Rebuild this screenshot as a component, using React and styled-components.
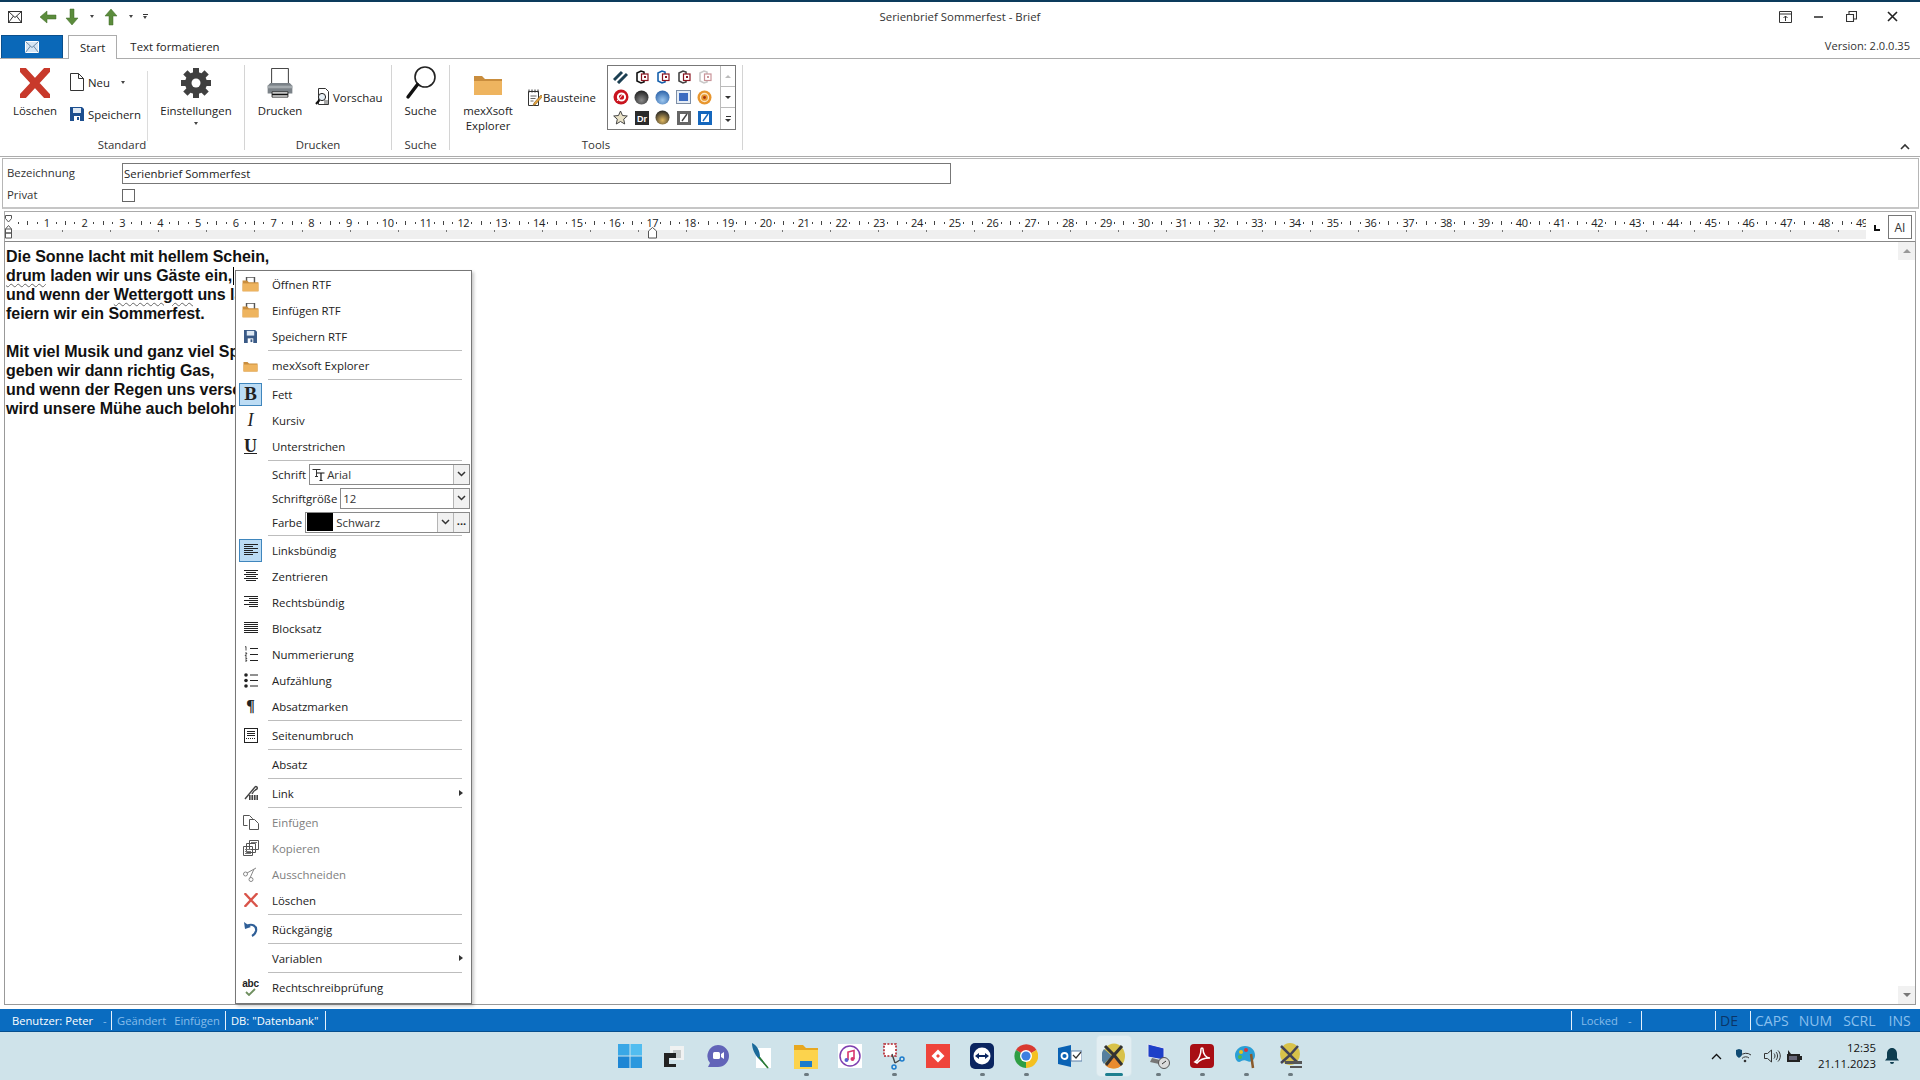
import React from 'react'
import styled, { createGlobalStyle } from 'styled-components'

const GlobalStyle = createGlobalStyle`
    html, body {
        margin: 0;
        width: 1920px;
        height: 1080px;
        overflow: hidden;
        background: #fff;
    }
    * { box-sizing: border-box; }
    svg { flex: none; }
    body {
        font-family: "Open Sans", "Noto Sans", sans-serif;
        font-size: 11.4px;
        color: #222;
    }
`

const Page = styled.div`
    position: relative;
    display: flex;
    flex-direction: column;
    width: 1920px;
    height: 1080px;
`

/* title bar */
const TitleBar = styled.div`
    display: grid;
    grid-template-columns: 1fr auto 1fr;
    align-items: center;
    height: 35px;
    padding-bottom: 4px;
    border-top: 2px solid #0c3b5c;
`
const Qat = styled.div`
    display: flex;
    align-items: center;
    padding-left: 8px;
`
const QatSlot = styled.span`
    display: flex;
    flex-direction: column;
    gap: 1px;
    align-items: center;
    justify-content: center;
    flex: none;
    width: ${({ $w }) => $w}px;
    margin-left: ${({ $ml }) => $ml || 0}px;
`
const TitleText = styled.div`
    color: #333;
`
const WindowButtons = styled.div`
    display: flex;
    justify-content: flex-end;
    align-items: center;
    padding-right: 4px;
`
const WindowButton = styled.span`
    display: flex;
    justify-content: center;
    width: ${({ $w }) => $w || 33}px;
`

/* tabs */
const TabRow = styled.div`
    display: flex;
    align-items: stretch;
    height: 24px;
    border-bottom: 1px solid #acacac;
`
const FileTab = styled.div`
    display: flex;
    align-items: center;
    justify-content: center;
    width: 62px;
    margin-left: 1px;
    background: #0a68b8;
    border: 1px solid #0a4f8c;
    border-bottom: none;
`
const Tab = styled.div`
    display: flex;
    align-items: center;
    justify-content: center;
    height: ${({ $active }) => ($active ? '24px' : '23px')};
    padding: 0 ${({ $active }) => ($active ? '11px' : '13px')};
    margin-left: ${({ $active }) => ($active ? '5px' : '0')};
    background: #fff;
    border: ${({ $active }) => ($active ? '1px solid #acacac' : 'none')};
    border-bottom: none;
`
const Version = styled.div`
    display: flex;
    align-items: center;
    margin-left: auto;
    padding: 0 10px 2px 0;
    font-size: 11.1px;
    color: #333;
`

/* ribbon */
const Ribbon = styled.div`
    position: relative;
    display: flex;
    align-items: flex-start;
    height: 98px;
    padding-top: 6px;
    border-bottom: 1px solid #acacac;
`
const Group = styled.div`
    display: flex;
    flex-direction: column;
    flex: none;
    width: ${({ $w }) => $w}px;
    height: 85px;
    border-right: 1px solid #d4d4d4;
`
const GroupBody = styled.div`
    display: flex;
    align-items: flex-start;
    height: 70px;
`
const GroupLabel = styled.div`
    height: 15px;
    line-height: 20px;
    text-align: center;
    color: #333;
`
const LargeButton = styled.div`
    display: flex;
    flex-direction: column;
    align-items: center;
    flex: none;
    width: ${({ $w }) => $w}px;
    margin-left: ${({ $ml }) => $ml || 0}px;
    line-height: 15px;
    text-align: center;
`
const LargeIcon = styled.div`
    display: flex;
    align-items: center;
    justify-content: center;
    height: 36px;
    margin-bottom: 2px;
`
const SmallArrow = styled.span`
    width: 0;
    height: 0;
    margin-left: ${({ $ml }) => $ml || 0}px;
    border-left: 2.5px solid transparent;
    border-right: 2.5px solid transparent;
    border-top: 3px solid #444;
`
const LargeArrow = styled(SmallArrow)`
    margin-top: 4px;
`
const SmallStack = styled.div`
    display: flex;
    flex-direction: column;
    gap: 10px;
    flex: none;
    width: ${({ $w }) => $w}px;
    padding-top: ${({ $top }) => $top}px;
`
const SmallButton = styled.div`
    display: flex;
    align-items: center;
    gap: ${({ $gap }) => $gap || 3}px;
    height: 22px;
    padding-left: ${({ $pl }) => $pl || 0}px;
`
const InnerSep = styled.div`
    align-self: stretch;
    width: 1px;
    margin: 6px 0 -6px;
    background: #dcdcdc;
`
const Gallery = styled.div`
    display: grid;
    grid-template-columns: 1fr 15px;
    flex: none;
    width: 129px;
    height: 65px;
    border: 1px solid #777;
`
const GalleryGrid = styled.div`
    display: grid;
    grid-template-columns: repeat(5, 1fr);
    grid-template-rows: repeat(3, 1fr);
    place-items: center;
    padding: 1px 5px 1px 2px;
`
const GalleryScroll = styled.div`
    display: grid;
    grid-template-rows: repeat(3, 1fr);
    border-left: 1px solid #bbb;
`
const GalleryScrollButton = styled.div`
    display: flex;
    flex-direction: column;
    gap: 2px;
    align-items: center;
    justify-content: center;
    border-bottom: 1px solid #bbb;
    &:last-child { border-bottom: none; }
`
const Bar = styled.i`
    display: block;
    width: 5px;
    height: 1px;
    background: #333;
`
const Triangle = styled.span`
    width: 0;
    height: 0;
    border-left: ${({ $size }) => $size || 3}px solid transparent;
    border-right: ${({ $size }) => $size || 3}px solid transparent;
    ${({ $up, $color, $size }) => ($up
        ? `border-bottom: ${$size || 3}px solid ${$color || '#333'};`
        : `border-top: ${$size || 3}px solid ${$color || '#333'};`)}
`
const Collapse = styled.div`
    position: absolute;
    right: 10px;
    bottom: 6px;
    line-height: 0;
`

/* form */
const FormPanel = styled.div`
    display: grid;
    grid-template-columns: 115px 829px;
    grid-template-rows: 22px 22px;
    align-items: center;
    height: 51px;
    margin: 1px 1px 0 2px;
    padding: 3px 0 0 4px;
    border: 1px solid #b6b6b6;
    border-bottom: 2px solid #c6c6c6;
`
const FieldLabel = styled.div`
    margin-top: -1px;
    color: #333;
`
const TextField = styled.input`
    height: 21px;
    padding: 0 1px;
    border: 1px solid #777;
    outline: none;
    font: inherit;
    color: #222;
`
const CheckBox = styled.span`
    width: 13px;
    height: 13px;
    border: 1px solid #666;
`

/* ruler */
const RulerBox = styled.div`
    display: flex;
    height: 31px;
    margin: 2px 4px 0;
    padding: 3px 0 2px;
    border: 1px solid #aaa;
    border-bottom: 1px solid #888;
`
const RulerBody = styled.div`
    position: relative;
    flex: none;
    width: 1861px;
    overflow: hidden;
`
const RulerStrip = styled.div`
    display: flex;
    align-items: center;
    height: 15px;
    padding-left: 8.9px;
    font-size: 11px;
    color: #222;
`
const RulerCell = styled.div`
    display: flex;
    align-items: center;
    flex: none;
    width: 37.8px;
`
const RulerTicks = styled.div`
    display: flex;
    align-items: center;
    justify-content: space-between;
    flex: none;
    width: 27.8px;
    padding: 0 4px;
`
const RulerTick = styled.i`
    display: block;
    width: 1px;
    height: ${({ $tall }) => ($tall ? 4 : 2)}px;
    background: #444;
`
const RulerNum = styled.span`
    flex: none;
    width: 10px;
    text-align: center;
    letter-spacing: -0.4px;
`
const RulerShade = styled.div`
    height: 9px;
    background-color: #efefef;
    background-image: repeating-linear-gradient(90deg, transparent 0 47px, #777 47px 48px);
    background-size: 100% 2px;
    background-repeat: no-repeat;
    background-position: 10px 0;
`
const RulerMarker = styled.svg`
    position: absolute;
    top: ${({ $top }) => $top}px;
    left: ${({ $left }) => $left}px;
`
const TabStop = styled.div`
    display: flex;
    align-items: center;
    justify-content: center;
    flex: none;
    width: 22px;
    padding-top: 2px;
`
const AutoButton = styled.div`
    display: flex;
    align-items: center;
    justify-content: center;
    flex: none;
    width: 24px;
    height: 24px;
    border: 1px solid #777;
    font-size: 12px;
    color: #333;
`

/* editor */
const Editor = styled.div`
    display: flex;
    flex: 1;
    min-height: 0;
    margin: 0 4px 4px;
    border: 1px solid #999;
    border-top: none;
`
const Letter = styled.div`
    flex: 1;
    padding: 5px 0 0 1px;
    font-family: "Liberation Sans", Arial, sans-serif;
    font-size: 16px;
    font-weight: 700;
    line-height: 19px;
    letter-spacing: -0.05px;
    color: #111;
    white-space: pre;
`
const Squiggle = styled.span`
    text-decoration: underline wavy #666 1px;
    text-underline-offset: 2px;
`
const Caret = styled.span`
    display: inline-block;
    width: 1px;
    height: 18px;
    margin-left: 1px;
    vertical-align: -4px;
    background: #000;
`
const ScrollColumn = styled.div`
    display: flex;
    flex-direction: column;
    justify-content: space-between;
    flex: none;
    width: 17px;
    background: #fff;
`
const ScrollButton = styled.div`
    display: flex;
    align-items: center;
    justify-content: center;
    height: 18px;
    background: #f1f1f1;
`

/* context menu */
const Menu = styled.div`
    position: absolute;
    top: 270px;
    left: 235px;
    width: 237px;
    padding: 0 1px 3px;
    background: #fff;
    border: 1px solid #777;
    box-shadow: 2px 2px 3px rgba(0, 0, 0, 0.22);
    z-index: 2;
`
const MenuRow = styled.div`
    display: grid;
    grid-template-columns: 35px 1fr 12px;
    align-items: center;
    height: 26px;
    color: ${({ $disabled }) => ($disabled ? '#808080' : '#222')};
`
const MenuIcon = styled.span`
    display: flex;
    align-items: center;
    justify-content: center;
    justify-self: start;
    width: 23px;
    height: 23px;
    margin-left: 2px;
    ${({ $on }) => $on && `
        background: #bcdcf4;
        border: 1px solid #3f86bd;
    `}
`
const MenuGlyph = styled.span`
    font-family: "Liberation Serif", serif;
    font-size: ${({ $size }) => $size || 18}px;
    font-weight: ${({ $italic }) => ($italic ? 400 : 700)};
    font-style: ${({ $italic }) => ($italic ? 'italic' : 'normal')};
    text-decoration: ${({ $underline }) => ($underline ? 'underline' : 'none')};
    color: #222;
`
const SubArrow = styled.span`
    width: 0;
    height: 0;
    margin-left: 1px;
    border-top: 3.5px solid transparent;
    border-bottom: 3.5px solid transparent;
    border-left: 4px solid #333;
`
const MenuSep = styled.div`
    height: 1px;
    margin: 1px 8px 1px 31px;
    background: #bdbdbd;
`
const ComboRow = styled.div`
    display: flex;
    align-items: center;
    gap: 3px;
    height: 24px;
    padding: 0 0 0 35px;
`
const Combo = styled.div`
    display: flex;
    align-items: stretch;
    flex: 1;
    height: 21px;
    border: 1px solid #8a8a8a;
`
const ComboValue = styled.div`
    display: flex;
    align-items: center;
    flex: 1;
    gap: 2px;
    padding-left: 2px;
    color: #333;
`
const ComboButton = styled.div`
    display: flex;
    align-items: center;
    justify-content: center;
    flex: none;
    width: 16px;
    background: #f1f1f1;
    border-left: 1px solid #b5b5b5;
`
const Swatch = styled.span`
    width: 26px;
    height: 18px;
    margin: 0 1px 0 -1px;
    background: #000;
`
const Dots = styled.span`
    font-weight: 700;
    font-size: 11px;
    line-height: 1;
    margin-top: -4px;
`
const AbcText = styled.span`
    display: block;
    font-family: "Liberation Sans", sans-serif;
    font-size: 10px;
    font-weight: 700;
    line-height: 9px;
    text-align: center;
    letter-spacing: -0.2px;
`
const AbcIcon = styled.span`
    display: flex;
    flex-direction: column;
    align-items: center;
`

/* status bar */
const StatusBar = styled.div`
    display: flex;
    align-items: center;
    flex: none;
    height: 23px;
    background: #0a6cc0;
    border-bottom: 1px solid #064f8e;
    color: #fff;
    font-size: 11.2px;
`
const StatusCell = styled.div`
    display: flex;
    align-items: center;
    flex: none;
    width: ${({ $w }) => $w}px;
    height: 19px;
    gap: ${({ $gap }) => $gap || 0}px;
    padding-left: ${({ $pl }) => $pl || 0}px;
    margin-left: ${({ $ml }) => $ml || 0}px;
    border-right: ${({ $plain }) => ($plain ? 'none' : '1px solid #e6f1fb')};
    color: ${({ $dim }) => ($dim ? '#86bcea' : 'inherit')};
`
const StatusStart = styled.div`
    flex: none;
    width: 1px;
    height: 19px;
    margin-left: ${({ $ml }) => $ml}px;
    background: #e6f1fb;
`
const Dim = styled.span`
    color: #86bcea;
    margin-left: ${({ $ml }) => $ml || 0}px;
`
const KeyFlag = styled.span`
    font-size: 14px;
    color: ${({ $dark }) => ($dark ? '#0a3568' : '#8ac0ee')};
    margin-left: ${({ $ml }) => $ml || 0}px;
`

/* taskbar */
const Taskbar = styled.div`
    display: grid;
    grid-template-columns: 1fr auto 1fr;
    align-items: center;
    flex: none;
    height: 48px;
    background: #cfe3ea;
`
const TaskIcons = styled.div`
    grid-column: 2;
    display: flex;
    align-items: center;
`
const TaskSlot = styled.div`
    position: relative;
    display: flex;
    align-items: center;
    justify-content: center;
    width: 44px;
    height: 40px;
    border-radius: 4px;
    ${({ $active }) => $active && `
        background: #e2eef2;
        box-shadow: 0 0 0 1px #d7e6ec;
        margin: 0 5px;
        width: 34px;
    `}
`
const TaskDot = styled.i`
    position: absolute;
    left: 50%;
    bottom: 0;
    width: ${({ $active }) => ($active ? 18 : 5)}px;
    height: 3px;
    margin-left: ${({ $active }) => ($active ? -9 : -2.5)}px;
    border-radius: 2px;
    background: ${({ $active }) => ($active ? '#1d7f8f' : '#6c7a80')};
`
const Tray = styled.div`
    display: flex;
    align-items: center;
    justify-content: flex-end;
    padding-right: 18px;
`
const TrayIcon = styled.span`
    display: flex;
    justify-content: center;
    flex: none;
    width: ${({ $w }) => $w}px;
`
const Clock = styled.div`
    margin: 0 6px 0 13px;
    font-size: 11.4px;
    line-height: 16px;
    text-align: right;
    color: #111;
`

/* drawings */
const CrossIcon = ({ size = 30, color = '#c8392b', width = 7 }) => (
    <svg width={size} height={size} viewBox="0 0 30 30">
        <path d="M3 2 L27 28 M27 2 L3 28" stroke={color} strokeWidth={width} strokeLinecap="square" />
    </svg>
)
const DocIcon = () => (
    <svg width="14" height="18" viewBox="0 0 14 18">
        <path d="M.5.5h8l5 5v12H.5z M8.5.5v5h5" fill="#fff" stroke="#333" />
    </svg>
)
const SaveIcon = ({ size = 14, color = '#1d4f8f' }) => (
    <svg width={size} height={size} viewBox="0 0 14 14">
        <path d="M0 0h12l2 2v12H0z" fill={color} />
        <path d="M3 1h8v5H3z" fill="#dfe9f4" />
        <path d="M4 9h6v5H4z" fill="#fff" />
        <path d="M7 10h2v3H7z" fill={color} />
    </svg>
)
const GearIcon = () => (
    <svg width="32" height="32" viewBox="0 0 32 32">
        {[0, 45, 90, 135, 180, 225, 270, 315].map((a) => (
            <rect key={a} x="13" y="1" width="6" height="7" fill="#404040" transform={`rotate(${a} 16 16)`} />
        ))}
        <circle cx="16" cy="16" r="11" fill="#404040" />
        <circle cx="16" cy="16" r="4.5" fill="#fff" />
    </svg>
)
const PrinterIcon = () => (
    <svg width="32" height="30" viewBox="0 0 32 34">
        <path d="M6.5.5h19v20h-19z" fill="#fff" stroke="#222" />
        <path d="M2 20l3-3h22l3 3v9H2z" fill="#7b8288" />
        <path d="M2 20h28v3H2z" fill="#a4aaae" />
        <path d="M7 27h18v6H7z" fill="#fff" stroke="#222" />
        <path d="M7 29h18v2H7z" fill="#111" />
    </svg>
)
const PreviewIcon = () => (
    <svg width="16" height="18" viewBox="0 0 16 18">
        <path d="M3.5.5h7l3 3v13h-10z" fill="#fff" stroke="#333" />
        <circle cx="7" cy="9" r="3.6" fill="#e8f0f6" stroke="#222" />
        <path d="M4.5 12L1 16" stroke="#111" strokeWidth="2" />
        <path d="M9 15h5M9 13h5" stroke="#555" />
    </svg>
)
const MagnifierIcon = () => (
    <svg width="32" height="36" viewBox="0 0 32 36">
        <circle cx="20" cy="12" r="10" fill="#fff" stroke="#222" strokeWidth="1.6" />
        <path d="M12.5 19.5L3 32" stroke="#111" strokeWidth="3.4" strokeLinecap="round" />
    </svg>
)
const FolderIcon = ({ width = 30, height = 26, paper }) => (
    <svg width={width} height={height} viewBox="0 0 30 26">
        {paper && <path d="M8 0h14v14H8z" fill="#fff" stroke="#555" strokeWidth="2.5" />}
        <path d="M1 6h8l3 3h17v16H1z" fill="#c98d3d" />
        <path d="M1 11h28v14H1z" fill="#eeb45f" />
    </svg>
)
const NoteIcon = () => (
    <svg width="15" height="17" viewBox="0 0 15 17">
        <path d="M1.5 2.5h10v14h-10z" fill="#fff" stroke="#333" />
        <path d="M2 .5v3M5 .5v3M8 .5v3M11 .5v3" stroke="#333" />
        <path d="M3.5 7h6M3.5 9.5h5M3.5 12h3" stroke="#666" />
        <path d="M14 6l-7 8-1 2.5 2.5-1 7-8z" fill="#e8a33c" stroke="#7a5a20" strokeWidth=".6" />
    </svg>
)
const ArrowIcon = ({ rotate = 0 }) => (
    <svg width="18" height="18" viewBox="0 0 18 18" style={{ transform: `rotate(${rotate}deg)` }}>
        <path d="M9 1L3 8h4v9h4V8h4z" fill="#5b8c3c" stroke="#3e6a26" strokeWidth=".5" />
    </svg>
)
const MailIcon = ({ color = '#333', fill = 'none' }) => (
    <svg width="14" height="12" viewBox="0 0 14 12">
        <rect x=".5" y=".5" width="13" height="11" fill={fill} stroke={color} />
        <path d="M.5.5L7 6.5 13.5.5M.5 11.5L5.5 5M13.5 11.5L8.5 5" fill="none" stroke={fill === 'none' ? color : '#6d8aa6'} />
    </svg>
)
const AlignIcon = ({ rows }) => (
    <svg width="16" height="14" viewBox="0 0 16 14">
        {rows.map(([x1, x2], i) => (
            <path key={i} d={`M${x1} ${i * 2 + 1.5}H${x2}`} stroke="#222" />
        ))}
    </svg>
)
const NumberedIcon = () => (
    <svg width="14" height="17" viewBox="0 0 14 17">
        <path d="M1 1l1-.5v4M1 7h2l-2 3h2M1 12h2l-1 1.5 1 1.5H1" fill="none" stroke="#222" strokeWidth=".8" />
        <path d="M6 2.5h8M6 8.5h8M6 14.5h8" stroke="#222" />
    </svg>
)
const BulletIcon = () => (
    <svg width="14" height="15" viewBox="0 0 14 15">
        <circle cx="2" cy="2" r="1.8" fill="#222" />
        <circle cx="2" cy="7.5" r="1.8" fill="#222" />
        <circle cx="2" cy="13" r="1.8" fill="#222" />
        <path d="M6 2h8M6 7.5h8M6 13h8" stroke="#222" />
    </svg>
)
const PageBreakIcon = () => (
    <svg width="14" height="15" viewBox="0 0 14 15">
        <rect x=".5" y=".5" width="13" height="14" fill="#fff" stroke="#222" />
        <path d="M3 3.5h8M3 5.5h8M3 7.5h8" stroke="#222" />
        <path d="M2 10.5h10" stroke="#222" strokeDasharray="1 1" />
    </svg>
)
const LinkIcon = () => (
    <svg width="17" height="16" viewBox="0 0 17 16">
        <path d="M3 14L13 2c1-1 3 0 2 2-3 1-4 3-5 5" fill="none" stroke="#444" strokeWidth="1.4" />
        <path d="M7 10h9v5H7z" fill="#444" />
        <path d="M9 10v5M11.5 10v5M14 10v5" stroke="#ddd" />
    </svg>
)
const PasteIcon = () => (
    <svg width="16" height="15" viewBox="0 0 16 15">
        <path d="M4.5 10.5H.5v-10h6l3 3v2" fill="#fff" stroke="#555" />
        <path d="M6.5 4.5h5l4 4v6h-9z" fill="#fff" stroke="#555" />
    </svg>
)
const CopyIcon = () => (
    <svg width="16" height="16" viewBox="0 0 16 16">
        <path d="M6.5.5h9v9h-9zM3.5 3.5h9v9h-9zM.5 6.5h9v9h-9z" fill="#fff" stroke="#555" />
        <path d="M2 9.5h6M2 11.5h6M2 13.5h6M8 2.5h6" stroke="#777" />
    </svg>
)
const ScissorsIcon = () => (
    <svg width="15" height="15" viewBox="0 0 15 15">
        <circle cx="2.5" cy="7" r="2" fill="none" stroke="#888" />
        <circle cx="8" cy="12.5" r="2" fill="none" stroke="#888" />
        <path d="M4 6l9-5M7 11L11 2" fill="none" stroke="#888" />
    </svg>
)
const UndoIcon = () => (
    <svg width="16" height="16" viewBox="0 0 16 16">
        <path d="M1 1l1 7 6-2z" fill="#2f5f97" />
        <path d="M4 5c5-3 10 0 9 5-.5 2-2 4-4 5" fill="none" stroke="#2f5f97" strokeWidth="2.2" />
    </svg>
)
const CheckIcon = () => (
    <svg width="13" height="8" viewBox="0 0 13 8">
        <path d="M2 4l3 3 6-6" fill="none" stroke="#6f8f5f" strokeWidth="1.8" />
    </svg>
)
const FontIcon = () => (
    <svg width="13" height="13" viewBox="0 0 13 13">
        <path d="M.5 1.5h8M4.5 1.5v7M3 8.5h3" stroke="#333" fill="none" />
        <path d="M5 5h7.5M9 5v7.5M7.5 12.5h3" stroke="#111" strokeWidth="1.2" fill="none" />
    </svg>
)
const ChevronDown = ({ color = '#333' }) => (
    <svg width="9" height="6" viewBox="0 0 9 6">
        <path d="M1 1l3.5 3.5L8 1" fill="none" stroke={color} strokeWidth="1.5" />
    </svg>
)

/* gallery icons */
const Boxes = ({ color, faded }) => (
    <svg width="14" height="14" viewBox="0 0 14 14" opacity={faded ? 0.45 : 1}>
        <path d="M2 3l4-2 3 1v10l-3 1-4-2z" fill="#fff" stroke={color} strokeWidth="1.6" />
        <rect x="6.5" y="4" width="6.5" height="6.5" fill="#fff" stroke="#8a1520" strokeWidth="1.2" />
        <rect x="9" y="6" width="2" height="2" fill="#8a1520" />
    </svg>
)
const Sphere = ({ id, light, dark }) => (
    <svg width="15" height="15" viewBox="0 0 15 15">
        <defs>
            <radialGradient id={id} cx=".5" cy=".7" r=".7">
                <stop offset="0" stopColor={light} />
                <stop offset="1" stopColor={dark} />
            </radialGradient>
        </defs>
        <circle cx="7.5" cy="7.5" r="7" fill={`url(#${id})`} />
    </svg>
)
const galleryIcons = [
    <svg key="g1" width="15" height="14" viewBox="0 0 15 14"><path d="M1 10l8-8M5 13l9-9" stroke="#1c3f52" strokeWidth="3" /></svg>,
    <Boxes key="g2" color="#111" />,
    <Boxes key="g3" color="#1560ad" />,
    <Boxes key="g4" color="#444" />,
    <Boxes key="g5" color="#888" faded />,
    <svg key="g6" width="16" height="16" viewBox="0 0 16 16"><circle cx="8" cy="8" r="7.5" fill="#c9141e" /><circle cx="8.5" cy="8" r="3.6" fill="none" stroke="#fff" strokeWidth="2" /><path d="M4 12l7-8" stroke="#fff" /></svg>,
    <Sphere key="g7" id="gs1" light="#8a8a8a" dark="#1f1f1f" />,
    <Sphere key="g8" id="gs2" light="#9cc6ee" dark="#2b62a8" />,
    <svg key="g9" width="15" height="14" viewBox="0 0 15 14"><rect x=".5" y=".5" width="14" height="13" fill="#e6edf5" stroke="#7d8ea6" /><rect x="3" y="3" width="9" height="8" fill="#3d6cc0" /></svg>,
    <svg key="g10" width="15" height="15" viewBox="0 0 15 15"><circle cx="7.5" cy="7.5" r="7" fill="#e8962e" /><circle cx="7.5" cy="7.5" r="4" fill="none" stroke="#fbe7c6" strokeWidth="1.3" /><circle cx="7.5" cy="7.5" r="1.4" fill="#a3330f" /></svg>,
    <svg key="g11" width="15" height="15" viewBox="0 0 15 15"><path d="M7.5 1l2 4.5 4.8.5-3.6 3.2 1 4.8-4.2-2.5-4.2 2.5 1-4.8L.7 6l4.8-.5z" fill="#e9e2c8" stroke="#444" /></svg>,
    <svg key="g12" width="14" height="14" viewBox="0 0 14 14"><rect width="14" height="14" fill="#2b2b2b" /><text x="7" y="10.5" textAnchor="middle" fontSize="9" fontWeight="700" fontFamily="Liberation Sans" fill="#fff">Dr</text></svg>,
    <Sphere key="g13" id="gs3" light="#e0b860" dark="#222" />,
    <svg key="g14" width="14" height="14" viewBox="0 0 14 14"><rect width="14" height="14" fill="#666" /><rect x="3" y="3" width="8" height="8" fill="#fff" /><path d="M5 10l5-7" stroke="#444" strokeWidth="1.4" /></svg>,
    <svg key="g15" width="14" height="14" viewBox="0 0 14 14"><rect width="14" height="14" fill="#1567bd" /><rect x="3" y="3" width="8" height="8" fill="#fff" /><path d="M5 10l5-7" stroke="#1567bd" strokeWidth="1.4" /></svg>,
]

/* taskbar icons */
const taskIcons = [
    { dot: false, icon: <svg width="24" height="24" viewBox="0 0 24 24"><path d="M0 0h11.5v11.5H0z" fill="#39a7e6" /><path d="M12.5 0H24v11.5H12.5z" fill="#52bdf0" /><path d="M0 12.5h11.5V24H0z" fill="#1e86d4" /><path d="M12.5 12.5H24V24H12.5z" fill="#2a98de" /></svg> },
    { dot: false, icon: <svg width="24" height="24" viewBox="0 0 24 24"><path d="M8 2h14v14H8z" fill="#f0f2f2" /><path d="M11 6h8v8h-8z" fill="#c8cccc" /><path d="M2 9h12v5H7v6h7v3H2z" fill="#222" /></svg> },
    { dot: false, icon: <svg width="24" height="24" viewBox="0 0 24 24"><path d="M12 1a11 11 0 0 1 0 22H2l2-4A11 11 0 0 1 12 1z" fill="#6264b8" /><rect x="7" y="8" width="7" height="7" rx="1.5" fill="#fff" /><path d="M15 10l3-2v7l-3-2z" fill="#fff" /></svg> },
    { dot: false, icon: <svg width="24" height="28" viewBox="0 0 24 28"><path d="M6 6h15v20H6z" fill="#fff" /><path d="M2 1c5 2 8 8 8 14l9 12-10-10C5 13 2 7 2 1z" fill="#1b6a9a" /><path d="M9 15l9 11" stroke="#2e7d32" strokeWidth="1.6" /></svg> },
    { dot: true, icon: <svg width="24" height="26" viewBox="0 0 24 26"><path d="M0 2h9l3 3h12v21H0z" fill="#e8a820" /><path d="M0 7h24v19H0z" fill="#fcd34d" /><path d="M6 18h12v6H6z" fill="#1c7ccc" /></svg> },
    { dot: false, icon: <svg width="24" height="24" viewBox="0 0 24 24"><rect width="24" height="24" fill="#fff" /><circle cx="12" cy="12" r="10" fill="#fff" stroke="#7f3fb0" strokeWidth="1.5" /><path d="M10 16V8l6-1.5V15" fill="none" stroke="#d9366e" strokeWidth="1.6" /><circle cx="8.5" cy="16" r="2" fill="#5a5fd0" /><circle cx="14.5" cy="15" r="2" fill="#d9366e" /></svg> },
    { dot: true, icon: <svg width="24" height="28" viewBox="0 0 24 28"><rect x="2" y="2" width="12" height="12" fill="#fff" stroke="#b3202a" strokeWidth="1.6" strokeDasharray="2 1.4" /><path d="M10 12l3 9M18 18l-5 3" stroke="#444" strokeWidth="1.4" /><circle cx="20" cy="17" r="2" fill="none" stroke="#1c7ccc" strokeWidth="1.5" /><circle cx="12" cy="25" r="2" fill="none" stroke="#1c7ccc" strokeWidth="1.5" /></svg> },
    { dot: false, icon: <svg width="24" height="24" viewBox="0 0 24 24"><rect width="24" height="24" fill="#ef443b" /><path d="M12 5.500l6.500 6.500-6.500 6.500L5.500 12z" fill="#fff" /><path d="M12 10l2 2-2 2-2-2z" fill="#ef443b" /></svg> },
    { dot: true, icon: <svg width="24" height="26" viewBox="0 0 24 26"><rect width="24" height="26" rx="5" fill="#0b2560" /><circle cx="12" cy="13" r="8.5" fill="#fff" /><path d="M5 13l4-3v2h6v-2l4 3-4 3v-2H9v2z" fill="#0b2560" /></svg> },
    { dot: true, icon: <svg width="24" height="24" viewBox="0 0 24 24"><path d="M12 12L2 6a12 12 0 0 1 20.500 0z" fill="#d93a30" /><path d="M12 12l10.500-6A12 12 0 0 1 12 24z" fill="#f4c020" /><path d="M12 12v12A12 12 0 0 1 2 6z" fill="#2f9e44" /><circle cx="12" cy="12" r="6" fill="#fff" /><circle cx="12" cy="12" r="4.600" fill="#3d7fe0" /></svg> },
    { dot: false, icon: <svg width="24" height="24" viewBox="0 0 24 24"><path d="M0 4l13-3v22L0 20z" fill="#0a62b4" /><circle cx="6.500" cy="12" r="3" fill="none" stroke="#fff" strokeWidth="1.8" /><rect x="13" y="7" width="11" height="10" fill="#fff" stroke="#5a7fa8" /><path d="M15 11l3 3 5-6" fill="none" stroke="#333" strokeWidth="1.2" /></svg> },
    { dot: true, active: true, icon: <svg width="24" height="26" viewBox="0 0 24 26"><ellipse cx="12" cy="13" rx="11" ry="12.500" fill="#d8c24a" /><path d="M2 6l8 7-8 8a12 12 0 0 1 0-15z" fill="#557f9e" /><path d="M3 22l9-8 8 8a12 12 0 0 1-17 0z" fill="#e88b2e" /><path d="M3 3l9 9 8-9" fill="none" stroke="#333" strokeWidth="3" /><path d="M4 22l8-10 8 10" fill="none" stroke="#333" strokeWidth="3" /></svg> },
    { dot: true, icon: <svg width="24" height="28" viewBox="0 0 24 28"><path d="M2 2l16 4v12L2 15z" fill="#1d3fc8" stroke="#e8eaf0" /><path d="M6 16l8 2-1 4-9-2z" fill="#777" /><circle cx="18" cy="21" r="5.500" fill="#dcdcdc" stroke="#555" /><path d="M16 22l4-3" stroke="#333" /></svg> },
    { dot: true, icon: <svg width="24" height="24" viewBox="0 0 24 24"><rect width="24" height="24" rx="4" fill="#a80e14" /><path d="M5 18c4-2 6-8 6-13 0-1.500 2-1.500 2 0 0 5 3 9 7 9-5 0-10 1-13 5z" fill="none" stroke="#fff" strokeWidth="1.500" /></svg> },
    { dot: true, icon: <svg width="24" height="26" viewBox="0 0 24 26"><path d="M11 3c6 0 10 4 10 9s-4 8-8 6-6 1-8 1-4-3-4-7 4-9 10-9z" fill="#2b9fd6" /><circle cx="7" cy="9" r="2" fill="#e8c020" /><circle cx="12" cy="7" r="2" fill="#d9363e" /><circle cx="6" cy="14" r="2" fill="#54b948" /><path d="M17 11l2 14" stroke="#8a5a2b" strokeWidth="2.500" /></svg> },
    { dot: true, icon: <svg width="24" height="26" viewBox="0 0 24 26"><ellipse cx="12" cy="11" rx="10" ry="11" fill="#d8c24a" /><path d="M3 3l9 9 8-9M3 20l9-8 8 8" fill="none" stroke="#445" strokeWidth="2.500" /><path d="M7 18h17v3H7zM12 23h12v2H12z" fill="#555" /></svg> },
]

const menuBefore = [
    { label: 'Öffnen RTF', icon: <FolderIcon width={17} height={15} paper /> },
    { label: 'Einfügen RTF', icon: <FolderIcon width={17} height={15} paper /> },
    { label: 'Speichern RTF', icon: <SaveIcon size={13} color="#3a5a86" /> },
    { sep: true },
    { label: 'mexXsoft Explorer', icon: <FolderIcon width={17} height={13} /> },
    { sep: true },
    { label: 'Fett', on: true, icon: <MenuGlyph $size={19}>B</MenuGlyph> },
    { label: 'Kursiv', icon: <MenuGlyph $italic>I</MenuGlyph> },
    { label: 'Unterstrichen', icon: <MenuGlyph $underline>U</MenuGlyph> },
    { sep: true },
]

const menuAfter = [
    { sep: true },
    { label: 'Linksbündig', on: true, icon: <AlignIcon rows={[[1, 15], [1, 10], [1, 15], [1, 10], [1, 15], [1, 10]]} /> },
    { label: 'Zentrieren', icon: <AlignIcon rows={[[1, 15], [3, 13], [1, 15], [3, 13], [1, 15], [3, 13]]} /> },
    { label: 'Rechtsbündig', icon: <AlignIcon rows={[[1, 15], [6, 15], [1, 15], [6, 15], [1, 15], [6, 15]]} /> },
    { label: 'Blocksatz', icon: <AlignIcon rows={[[1, 15], [1, 15], [1, 15], [1, 15], [1, 15], [1, 15]]} /> },
    { label: 'Nummerierung', icon: <NumberedIcon /> },
    { label: 'Aufzählung', icon: <BulletIcon /> },
    { label: 'Absatzmarken', icon: <MenuGlyph $size={16}>¶</MenuGlyph> },
    { sep: true },
    { label: 'Seitenumbruch', icon: <PageBreakIcon /> },
    { sep: true },
    { label: 'Absatz' },
    { sep: true },
    { label: 'Link', sub: true, icon: <LinkIcon /> },
    { sep: true },
    { label: 'Einfügen', disabled: true, icon: <PasteIcon /> },
    { label: 'Kopieren', disabled: true, icon: <CopyIcon /> },
    { label: 'Ausschneiden', disabled: true, icon: <ScissorsIcon /> },
    { label: 'Löschen', icon: <CrossIcon size={14} color="#d9544a" width={5} /> },
    { sep: true },
    { label: 'Rückgängig', icon: <UndoIcon /> },
    { sep: true },
    { label: 'Variablen', sub: true },
    { sep: true },
    { label: 'Rechtschreibprüfung', icon: <AbcIcon><AbcText>abc</AbcText><CheckIcon /></AbcIcon> },
]

const renderMenuItems = (items) => items.map((item, i) => (
    item.sep ? <MenuSep key={i} /> : (
        <MenuRow key={item.label} $disabled={item.disabled}>
            <MenuIcon $on={item.on}>{item.icon}</MenuIcon>
            <span>{item.label}</span>
            {item.sub && <SubArrow />}
        </MenuRow>
    )
))

const rulerNumbers = Array.from({ length: 49 }, (_, i) => i + 1)

const App = () => (
    <Page>
        <GlobalStyle />
        <TitleBar>
            <Qat>
                <QatSlot $w={14}><MailIcon /></QatSlot>
                <QatSlot $w={18} $ml={17}><ArrowIcon rotate={-90} /></QatSlot>
                <QatSlot $w={18} $ml={6}><ArrowIcon rotate={180} /></QatSlot>
                <QatSlot $w={21}><SmallArrow /></QatSlot>
                <QatSlot $w={18}><ArrowIcon /></QatSlot>
                <QatSlot $w={22}><SmallArrow /></QatSlot>
                <QatSlot $w={6}><Bar /><SmallArrow /></QatSlot>
            </Qat>
            <TitleText>Serienbrief Sommerfest - Brief</TitleText>
            <WindowButtons>
                <WindowButton>
                    <svg width="13" height="12" viewBox="0 0 13 12"><path d="M.5.5h12v11H.5zM.5 3h12M6.500 10V5M4.500 7l2-2 2 2" fill="none" stroke="#333" /></svg>
                </WindowButton>
                <WindowButton>
                    <svg width="9" height="2" viewBox="0 0 9 2"><path d="M0 1h9" stroke="#333" strokeWidth="1.6" /></svg>
                </WindowButton>
                <WindowButton>
                    <svg width="11" height="11" viewBox="0 0 11 11"><path d="M.5 3.500h7v7h-7zM3 3V.5h7.500V8H8" fill="none" stroke="#333" strokeWidth="1.1" /></svg>
                </WindowButton>
                <WindowButton $w={48}>
                    <svg width="11" height="11" viewBox="0 0 11 11"><path d="M1 1l9 9M10 1l-9 9" stroke="#222" strokeWidth="1.6" /></svg>
                </WindowButton>
            </WindowButtons>
        </TitleBar>

        <TabRow>
            <FileTab><MailIcon color="#fff" fill="#d5e5f3" /></FileTab>
            <Tab $active>Start</Tab>
            <Tab>Text formatieren</Tab>
            <Version>Version: 2.0.0.35</Version>
        </TabRow>

        <Ribbon>
            <Group $w={245}>
                <GroupBody>
                    <LargeButton $w={56} $ml={7}>
                        <LargeIcon><CrossIcon /></LargeIcon>
                        Löschen
                    </LargeButton>
                    <SmallStack $w={84} $top={6}>
                        <SmallButton $pl={7} $gap={4}>
                            <DocIcon /><span>Neu</span><SmallArrow $ml={7} />
                        </SmallButton>
                        <SmallButton $pl={7} $gap={4}><SaveIcon />Speichern</SmallButton>
                    </SmallStack>
                    <InnerSep />
                    <LargeButton $w={96}>
                        <LargeIcon><GearIcon /></LargeIcon>
                        Einstellungen
                        <LargeArrow />
                    </LargeButton>
                </GroupBody>
                <GroupLabel>Standard</GroupLabel>
            </Group>
            <Group $w={147}>
                <GroupBody>
                    <LargeButton $w={70}>
                        <LargeIcon><PrinterIcon /></LargeIcon>
                        Drucken
                    </LargeButton>
                    <SmallStack $w={76} $top={21}>
                        <SmallButton $gap={2}><PreviewIcon />Vorschau</SmallButton>
                    </SmallStack>
                </GroupBody>
                <GroupLabel>Drucken</GroupLabel>
            </Group>
            <Group $w={58}>
                <GroupBody>
                    <LargeButton $w={57}>
                        <LargeIcon><MagnifierIcon /></LargeIcon>
                        Suche
                    </LargeButton>
                </GroupBody>
                <GroupLabel>Suche</GroupLabel>
            </Group>
            <Group $w={293}>
                <GroupBody>
                    <LargeButton $w={76}>
                        <LargeIcon><FolderIcon /></LargeIcon>
                        mexXsoft
                        <br />
                        Explorer
                    </LargeButton>
                    <SmallStack $w={81} $top={21}>
                        <SmallButton $gap={1} $pl={1}><NoteIcon />Bausteine</SmallButton>
                    </SmallStack>
                    <Gallery>
                        <GalleryGrid>{galleryIcons}</GalleryGrid>
                        <GalleryScroll>
                            <GalleryScrollButton><Triangle $up $color="#bbb" /></GalleryScrollButton>
                            <GalleryScrollButton><Triangle /></GalleryScrollButton>
                            <GalleryScrollButton><Bar /><Triangle /></GalleryScrollButton>
                        </GalleryScroll>
                    </Gallery>
                </GroupBody>
                <GroupLabel>Tools</GroupLabel>
            </Group>
            <Collapse>
                <svg width="10" height="7" viewBox="0 0 10 7"><path d="M1 6l4-4 4 4" fill="none" stroke="#333" strokeWidth="1.6" /></svg>
            </Collapse>
        </Ribbon>

        <FormPanel>
            <FieldLabel>Bezeichnung</FieldLabel>
            <TextField readOnly value="Serienbrief Sommerfest" />
            <FieldLabel>Privat</FieldLabel>
            <CheckBox />
        </FormPanel>

        <RulerBox>
            <RulerBody>
                <RulerStrip>
                    {rulerNumbers.map((n) => (
                        <RulerCell key={n}>
                            <RulerTicks>
                                <RulerTick />
                                <RulerTick $tall />
                                <RulerTick />
                            </RulerTicks>
                            <RulerNum>{n}</RulerNum>
                        </RulerCell>
                    ))}
                </RulerStrip>
                <RulerShade />
                <RulerMarker $top={0} $left={0} width="8" height="24" viewBox="0 0 8 24">
                    <path d="M.5.5h6v3L3.500 7 .5 3.500zM.5 14L3.500 10.500 6.500 14M.5 14h6v4h-6zM.5 18h6v5h-6z" fill="#fff" stroke="#555" />
                </RulerMarker>
                <RulerMarker $top={12} $left={643} width="9" height="12" viewBox="0 0 9 12">
                    <path d="M.5 4L4.500.5 8.500 4v7h-8z" fill="#fff" stroke="#555" />
                </RulerMarker>
            </RulerBody>
            <TabStop>
                <svg width="6" height="6" viewBox="0 0 6 6"><path d="M1 0v5h5" fill="none" stroke="#111" strokeWidth="2" /></svg>
            </TabStop>
            <AutoButton>AI</AutoButton>
        </RulerBox>

        <Editor>
            <Letter>
                Die Sonne lacht mit hellem Schein,{'\n'}
                <Squiggle>drum</Squiggle> laden wir uns Gäste ein,<Caret />{'\n'}
                und wenn der <Squiggle>Wettergott</Squiggle> uns lacht,{'\n'}
                feiern wir ein Sommerfest.{'\n'}
                {'\n'}
                Mit viel Musik und ganz viel Spaß{'\n'}
                geben wir dann richtig Gas,{'\n'}
                und wenn der Regen uns verschont,{'\n'}
                wird unsere Mühe auch belohnt.
            </Letter>
            <ScrollColumn>
                <ScrollButton><Triangle $up $size={4.5} $color="#999" /></ScrollButton>
                <ScrollButton><Triangle $size={4.5} $color="#777" /></ScrollButton>
            </ScrollColumn>
        </Editor>

        <Menu>
            {renderMenuItems(menuBefore)}
            <ComboRow>
                Schrift
                <Combo>
                    <ComboValue><FontIcon />Arial</ComboValue>
                    <ComboButton><ChevronDown /></ComboButton>
                </Combo>
            </ComboRow>
            <ComboRow>
                Schriftgröße
                <Combo>
                    <ComboValue>12</ComboValue>
                    <ComboButton><ChevronDown /></ComboButton>
                </Combo>
            </ComboRow>
            <ComboRow>
                Farbe
                <Combo>
                    <ComboValue><Swatch />Schwarz</ComboValue>
                    <ComboButton><ChevronDown /></ComboButton>
                    <ComboButton><Dots>...</Dots></ComboButton>
                </Combo>
            </ComboRow>
            {renderMenuItems(menuAfter)}
        </Menu>

        <StatusBar>
            <StatusCell $w={112} $pl={12}>Benutzer: Peter<Dim $ml={10}>-</Dim></StatusCell>
            <StatusCell $w={114} $pl={5} $gap={8} $dim><span>Geändert</span><span>Einfügen</span></StatusCell>
            <StatusCell $w={100} $pl={5}>DB: "Datenbank"</StatusCell>
            <StatusStart $ml={1245} />
            <StatusCell $w={70} $pl={9} $dim>Locked<Dim $ml={10}>-</Dim></StatusCell>
            <StatusStart $ml={73} />
            <StatusCell $w={35} $pl={4}><KeyFlag $dark>DE</KeyFlag></StatusCell>
            <StatusCell $w={170} $pl={4} $plain>
                <KeyFlag>CAPS</KeyFlag>
                <KeyFlag $ml={10}>NUM</KeyFlag>
                <KeyFlag $ml={11}>SCRL</KeyFlag>
                <KeyFlag $ml={13}>INS</KeyFlag>
            </StatusCell>
        </StatusBar>

        <Taskbar>
            <TaskIcons>
                {taskIcons.map((item, i) => (
                    <TaskSlot key={i} $active={item.active}>
                        {item.icon}
                        {item.dot && <TaskDot $active={item.active} />}
                    </TaskSlot>
                ))}
            </TaskIcons>
            <Tray>
                <TrayIcon $w={20}>
                    <svg width="11" height="7" viewBox="0 0 11 7"><path d="M1 6l4.500-4.500L10 6" fill="none" stroke="#111" strokeWidth="1.3" /></svg>
                </TrayIcon>
                <TrayIcon $w={34}>
                    <svg width="16" height="14" viewBox="0 0 16 14"><path d="M6 9.500a5 5 0 0 1 7-.5M4 7a8 8 0 0 1 11-1" fill="none" stroke="#333" /><circle cx="9" cy="12" r="1.300" fill="#333" /><path d="M0 1l3-1 3 1v4c0 2-2 3-3 4-1-1-3-2-3-4z" fill="#0f4a72" /></svg>
                </TrayIcon>
                <TrayIcon $w={24}>
                    <svg width="17" height="14" viewBox="0 0 17 14"><path d="M.5 4.500h3L7.500 1v12l-4-3.500h-3z" fill="none" stroke="#333" /><path d="M10 4.500c1.300 1.300 1.300 3.700 0 5M12 3c2 2 2 6 0 8M14 1.500c3 3 3 8 0 11" fill="none" stroke="#333" /></svg>
                </TrayIcon>
                <TrayIcon $w={20}>
                    <svg width="17" height="13" viewBox="0 0 17 13"><path d="M1 4h13v8H1z" fill="#222" /><path d="M14 6h2v4h-2z" fill="#222" /><path d="M2 0l3 4H2z" fill="#222" /><path d="M3 6h8v4H3z" fill="#667" /></svg>
                </TrayIcon>
                <Clock>12:35<br />21.11.2023</Clock>
                <TrayIcon $w={20}>
                    <svg width="14" height="16" viewBox="0 0 14 16"><path d="M7 0c3 0 5 2.500 5 5.500V10l2 2.500H0L2 10V5.500C2 2.500 4 0 7 0z" fill="#0e3d50" /><path d="M5 14h4a2 2 0 0 1-4 0z" fill="#0e3d50" /></svg>
                </TrayIcon>
            </Tray>
        </Taskbar>
    </Page>
)

export default App
